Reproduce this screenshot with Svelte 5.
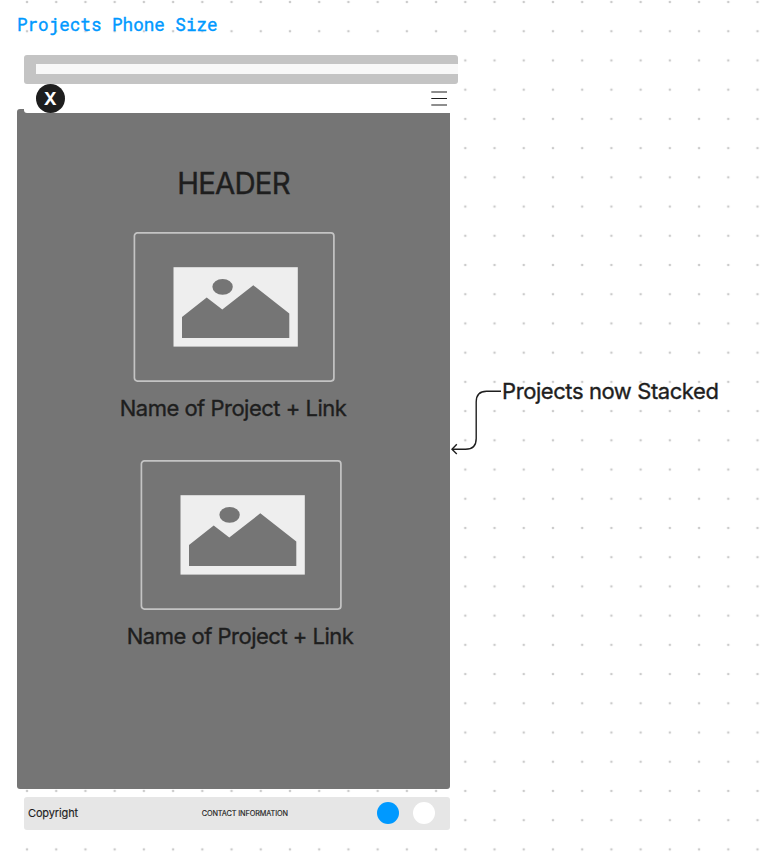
<script>
  const projects = [
    { name: 'Name of Project + Link', shift: 0.3 },
    { name: 'Name of Project + Link', shift: 7.4 },
  ];
</script>

<main class="board">
  <svg class="grid" width="766" height="860" aria-hidden="true">
    <defs>
      <pattern id="dots" x="12.4" y="-12.6" width="29.22" height="29.22" patternUnits="userSpaceOnUse">
        <circle cx="14.61" cy="14.61" r="1.3" fill="#cbcbcb" />
      </pattern>
    </defs>
    <rect width="766" height="860" fill="url(#dots)" />
  </svg>

  <section class="phone">
    <h2 class="title">Projects Phone Size</h2>
    <div class="browser"><div class="address"></div></div>
    <nav class="nav">
      <div class="logo">X</div>
      <svg class="menu" width="16" height="16" viewBox="0 0 16 16">
        <path d="M0.3 2H16M0.3 8.5H16M0.3 15H16" stroke="#1e1e1e" stroke-width="1.2" />
      </svg>
    </nav>
    <div class="screen">
      <h1>HEADER</h1>
      {#each projects as project}
        <article class="project" style="margin-left: {project.shift}px">
          <div class="frame">
            <svg width="202" height="150" viewBox="0 0 202 150">
              <rect x="1.4" y="0.9" width="199.5" height="148.2" rx="3" fill="none" stroke="#c4c4c4" stroke-width="1.7" />
              <g transform="translate(40.3 35)">
                <rect x="0.2" y="0.2" width="124.3" height="79.4" fill="#eee" />
                <path d="M8.7 50L33.4 30.5L49 42.5L80 18.3L116 46.5V71H8.7Z" fill="#757575" />
                <ellipse cx="49.3" cy="19.8" rx="10.2" ry="7.9" fill="#757575" />
              </g>
            </svg>
          </div>
          <p>{project.name}</p>
        </article>
      {/each}
    </div>
    <footer class="footer">
      <span class="copyright">Copyright</span>
      <span class="contact">CONTACT INFORMATION</span>
      <span class="dot blue"></span>
      <span class="dot white"></span>
    </footer>
  </section>

  <svg class="connector" width="54" height="70" viewBox="0 0 54 70" fill="none" stroke="#1e1e1e" stroke-width="1.4">
    <path d="M53 6.2H38.5Q28.2 6.2 28.2 17V53.5Q28.2 64.3 17.5 64.3H4" />
    <path d="M8.8 59.3L4 64.3L8.8 69" />
  </svg>
  <p class="note">Projects now Stacked</p>
</main>

<style>
  :global(body) {
    margin: 0;
    background: #fff;
  }
  .board {
    position: relative;
    width: 766px;
    height: 860px;
    overflow: hidden;
    background: #fff;
    color: #1e1e1e;
    font-family: Inter, sans-serif;
  }
  h1, h2, p {
    margin: 0;
    font-weight: 400;
    white-space: nowrap;
  }
  .grid {
    position: absolute;
    inset: 0;
  }
  .phone {
    position: relative;
    width: 441px;
    padding: 12px 0 0 17px;
    display: flex;
    flex-direction: column;
  }
  .title {
    height: 43px;
    font: 400 17.6px/26px 'Roboto Mono', 'Liberation Mono', monospace;
    color: #0099ff;
    -webkit-text-stroke: 0.4px #0099ff;
  }
  .browser {
    box-sizing: border-box;
    margin-left: 7px;
    width: 434px;
    height: 29px;
    padding: 9px 0 10px 11.5px;
    border-radius: 3px;
    background: #c4c4c4;
  }
  .address {
    height: 10px;
    background: #f8f8f8;
  }
  .nav {
    position: relative;
    z-index: 1;
    box-sizing: border-box;
    margin-left: 7px;
    width: 426px;
    height: 28.5px;
    padding: 0 3px 0 11.5px;
    display: flex;
    align-items: center;
    justify-content: space-between;
    border-radius: 3px 0 0 3px;
    background: #fff;
  }
  .logo {
    width: 29.4px;
    height: 29.4px;
    border-radius: 50%;
    background: #1e1e1e;
    color: #fff;
    font-size: 17.6px;
    font-weight: 700;
    line-height: 30px;
    text-align: center;
  }
  .screen {
    box-sizing: border-box;
    width: 433px;
    height: 680.2px;
    margin-top: -3.5px;
    padding-top: 57px;
    border-radius: 3px;
    background: #757575;
    display: flex;
    flex-direction: column;
  }
  h1 {
    height: 66px;
    text-align: center;
    font-size: 29.3px;
    line-height: 36px;
    letter-spacing: -0.8px;
    -webkit-text-stroke: 0.4px #1e1e1e;
  }
  .project {
    width: 433px;
    height: 227.8px;
    flex: none;
    display: flex;
    flex-direction: column;
    align-items: center;
  }
  .frame {
    width: 202px;
    height: 150px;
  }
  .frame svg {
    display: block;
  }
  .project p {
    margin: 12px 1.6px 0 0;
    font-size: 22px;
    line-height: 28px;
    letter-spacing: -0.5px;
    -webkit-text-stroke: 0.35px #1e1e1e;
  }
  .footer {
    box-sizing: border-box;
    margin: 7.8px 0 0 7px;
    width: 426px;
    height: 32.6px;
    padding: 0 13.5px 0 4px;
    display: flex;
    align-items: center;
    border-radius: 3px;
    background: #e6e6e6;
  }
  .copyright {
    width: 173.7px;
    font-size: 11px;
    letter-spacing: -0.13px;
    -webkit-text-stroke: 0.15px #1e1e1e;
  }
  .contact {
    width: 175px;
    font-size: 7.3px;
    letter-spacing: -0.1px;
    white-space: nowrap;
    -webkit-text-stroke: 0.15px #1e1e1e;
  }
  .dot {
    width: 22px;
    height: 22px;
    border-radius: 50%;
  }
  .blue {
    background: #0099ff;
  }
  .white {
    margin-left: 14.6px;
    background: #fff;
  }
  .connector {
    position: absolute;
    left: 448px;
    top: 385px;
  }
  .note {
    position: absolute;
    left: 502px;
    top: 377px;
    font-size: 22px;
    line-height: 28px;
    letter-spacing: -0.42px;
    -webkit-text-stroke: 0.35px #1e1e1e;
  }
</style>
